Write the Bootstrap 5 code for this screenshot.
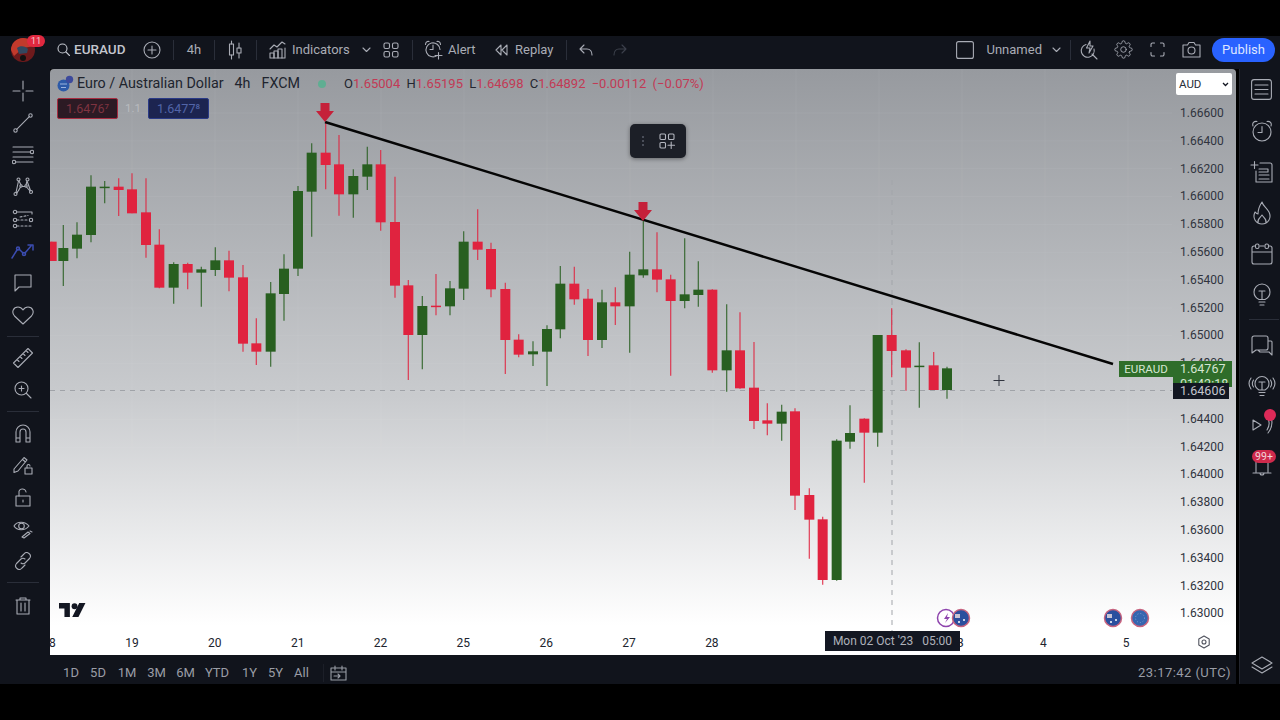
<!DOCTYPE html>
<html lang="en">
<head>
<meta charset="UTF-8" />
<meta name="viewport" content="width=device-width, initial-scale=1" />
<title>EURAUD chart</title>
<link href="https://cdn.jsdelivr.net/npm/bootstrap@5.3.0/dist/css/bootstrap.min.css" rel="stylesheet">
<style>
  html, body { height: 100%; }
  body { background: #000; font-family: Roboto, "Liberation Sans", sans-serif; color: #a9acb5; overflow: hidden; }
  .band { height: 36px; background: #000; }
  .ic { fill: none; stroke: currentColor; stroke-width: 1.1; stroke-linecap: round; stroke-linejoin: round; flex: none; }
  .main-row { height: 615px; }

  /* top toolbar */
  .topbar { height: 33px; background: #11141c; font-size: 13px; padding-bottom: 6px; }
  .tb-cell { height: 27px; display: flex; align-items: center; justify-content: center; flex: none; }
  .tb-sep { width: 1px; height: 20px; background: #2a2e39; margin: 0 8px; flex: none; }
  .tb-logo { width: 46px; position: relative; }
  .logo-badge { position: absolute; left: 27px; top: -1px; width: 18px; height: 12px; border-radius: 6px; background: #e0283f; color: #f3c6cc; font-size: 9.5px; line-height: 12px; text-align: center; }
  .tb-sym { width: 92px; padding-left: 11px; gap: 4px; justify-content: flex-start; font-weight: 500; font-size: 13.5px; color: #c3c6ce; }
  .w-plus { width: 27px; } .w-int { width: 24px; } .w-candle { width: 25px; }
  .w-ind { width: 90px; padding-left: 4px; gap: 5px; justify-content: flex-start; }
  .w-chev { width: 23px; } .w-grid { width: 26px; }
  .w-alert { width: 68px; padding-left: 3px; gap: 5px; justify-content: flex-start; }
  .w-replay { width: 69px; padding-left: 6px; gap: 7px; justify-content: flex-start; }
  .w-undo { width: 22px; } .w-redo { width: 46px; color: #3c404b; }
  .w-tool { width: 34px; }
  .w-save { gap: 13px; }
  .w-save-chev { width: 20px; margin-left: 4px; }
  .sep-tight { margin: 0 1px 0 4px; }
  .pub-btn { background: #2962ff; color: #dfe6ff; height: 24px; width: 63px; border-radius: 12px; font-size: 13px; line-height: 24px; padding: 0; border: 0; margin: 0 5px 0 4px; }

  /* side toolbars */
  .leftbar { width: 50px; background: #11141c; padding-top: 6px; flex: none; }
  .rightbar { width: 44px; background: #11141c; border-left: 1px solid #23262f; margin-left: 3px; flex: none; margin-right: -3px; }
  .lb-btn { width: 46px; height: 32px; display: flex; align-items: center; justify-content: center; }
  .lb-sep { width: 32px; height: 1px; background: #2a2e39; margin: 5px 0 5px 7px; }
  .lb-sep-last { margin-bottom: 7px; }
  .tool-on { color: #3b4cb0; stroke-width: 1.5; }
  .rb-btn { height: 41px; display: flex; align-items: center; justify-content: center; position: relative; }
  .rb-short { height: 38px; }
  .rb-bell { margin-top: 7px; }
  .rb-sep { width: 30px; height: 1px; background: #2a2e39; margin: 4px 0 6px 9px; }
  .rb-layers { height: 38px; margin-top: auto; }
  .rb-dot { position: absolute; right: 7px; top: 4px; width: 12px; height: 12px; border-radius: 50%; background: #dd2a58; }
  .rb-badge { position: absolute; left: 12px; top: 0; width: 24px; height: 13px; border-radius: 7px; background: #cf2a4c; color: #f3d5da; font-size: 10.5px; line-height: 13px; text-align: center; }

  /* chart */
  .chart-col { width: 1186px; flex: none; }
  .chart-wrap { height: 586px; position: relative; overflow: hidden; border-radius: 4px 4px 0 0; background: linear-gradient(#979a9f 0%, #c9cbce 56%, #fff 95%); }
  .chart-svg { position: absolute; left: 0; top: 0; }
  .plot { width: 1122px; position: relative; }
  .legend { height: 29px; padding-left: 7px; color: #20242e; font-size: 14.3px; }
  .leg-name { margin-left: 3px; }
  .leg-tf { margin-left: 11px; }
  .leg-src { margin-left: 11px; }
  .leg-dot { width: 8px; height: 8px; border-radius: 50%; background: #5fae92; margin: 0 18px 0 18px; }
  .ohlc { font-size: 13px; color: #c23a55; white-space: nowrap; word-spacing: 3px; }
  .ohlc b { font-weight: 400; color: #23262f; }
  .ask-row { padding-left: 7px; gap: 7px; height: 21px; font-size: 12.5px; }
  .ask-box { width: 61px; height: 21px; border-radius: 2px; text-align: center; line-height: 19px; }
  .ask-sell { background: #2c1a24; border: 1px solid #a62c40; color: #7f3340; }
  .ask-buy { background: #1c2450; border: 1px solid #2a3a86; color: #5264a8; }
  .ask-mid { width: 16px; text-align: center; color: #b9bbbf; line-height: 21px; font-size: 11.5px; }
  .float-bar { position: absolute; left: 580px; top: 55px; width: 56px; height: 34px; background: #1c1f27; border-radius: 5px; box-shadow: 0 1px 4px rgba(0,0,0,.4); color: #b2b5be; }
  .float-dots { width: 2px; height: 10px; margin-left: 12px; margin-right: 15px; border-left: 2px dotted #4a4e59; }
  .tv-logo { position: absolute; left: 9px; top: 534px; }
  .xaxis { margin-top: auto; height: 27px; margin-left: -42.3px; color: #20242e; font-size: 12px; line-height: 31px; position: relative; }
  .xtick { width: 82.85px; text-align: center; flex: none; }
  .date-tag { position: absolute; left: 775px; top: 562px; width: 135px; height: 20px; background: #131722; color: #aeb1ba; font-size: 12px; line-height: 21px; text-align: center; white-space: pre; }
  .yaxis { width: 64px; position: relative; color: #30343e; font-size: 12px; }
  .aud-box { width: 56px; height: 22px; margin: 4px 0 5px 4px; background: #fff; border-radius: 2px; color: #2a2e39; font-size: 11.5px; line-height: 22px; padding: 0 3px; }
  .ylabel { height: 27.8px; line-height: 27.8px; padding-left: 8px; }
  .ygear { margin-top: auto; height: 27px; color: #50535e; }
  .tag-name { position: absolute; left: 1069px; top: 292px; width: 54px; height: 16px; background: #2f6d2a; color: #d5e6d2; font-size: 11.5px; line-height: 16px; text-align: center; }
  .tag-price { position: absolute; left: 1123px; top: 292px; width: 59px; height: 26px; background: #2f6d2a; color: #d5e6d2; font-size: 12.5px; line-height: 15px; padding-left: 7px; overflow: hidden; }
  .tag-cross { position: absolute; left: 1123px; top: 314px; width: 56px; height: 16px; background: #131722; color: #c3c6ce; font-size: 12.5px; line-height: 16px; padding-left: 7px; }

  /* bottom bar */
  .timebar { height: 29px; background: #11141c; font-size: 13px; color: #9a9da6; padding-top: 7px; }
  .range { text-align: center; flex: none; }
  .r1d { width: 26px; margin-left: 8px; } .r5d { width: 28px; } .r1m { width: 30px; } .r3m { width: 29px; } .r6m { width: 29px; }
  .rytd { width: 34px; } .r1y { width: 31px; } .r5y { width: 21px; } .rall { width: 31px; }
  .time-sep { width: 1px; height: 18px; background: #1c1f28; margin: 0 6px; }
  .clock { margin-left: auto; margin-right: 5px; letter-spacing: .45px; }
</style>
</head>
<body>
<div class="band"></div>

<!-- top toolbar -->
<div class="topbar d-flex align-items-center">
  <div class="tb-cell tb-logo">
    <svg width="24" height="24" viewBox="0 0 24 24"><circle cx="12" cy="12" r="12" fill="#6e1a1c"/><path d="M0 12a12 12 0 0 1 12-12c7 0 12 5 12 8L12 10 3 18z" fill="#c23a2c"/><path d="M6 10c3-3 9-2 11 1l-1 4-8 1z" fill="#33485f"/><circle cx="12" cy="20" r="3" fill="#111"/></svg>
    <span class="logo-badge">11</span>
  </div>
  <div class="tb-cell tb-sym">
    <svg class="ic" width="13" height="13" viewBox="0 0 13 13"><circle cx="5.5" cy="5.5" r="4.5"/><path d="M9 9l3.5 3.5"/></svg>
    <span>EURAUD</span>
  </div>
  <div class="tb-cell w-plus"><svg class="ic" width="18" height="18" viewBox="0 0 18 18"><circle cx="9" cy="9" r="8"/><path d="M9 5v8M5 9h8"/></svg></div>
  <div class="tb-sep"></div>
  <div class="tb-cell w-int">4h</div>
  <div class="tb-sep"></div>
  <div class="tb-cell w-candle"><svg class="ic" width="15" height="20" viewBox="0 0 15 20"><rect x="1.5" y="4" width="4" height="11"/><path d="M3.5 1v3M3.5 15v4M11 3v5M11 13v5"/><rect x="9" y="8" width="4" height="5"/></svg></div>
  <div class="tb-sep"></div>
  <div class="tb-cell w-ind">
    <svg class="ic" width="18" height="18" viewBox="0 0 18 18"><path d="M1 8l4-4 3 2 5-5 3 2"/><rect x="1" y="12" width="4" height="5"/><rect x="5" y="10" width="4" height="7"/><rect x="9" y="8" width="4" height="9"/><path d="M13 17h3V7"/></svg>
    <span>Indicators</span>
  </div>
  <div class="tb-cell w-chev"><svg class="ic" width="9" height="6" viewBox="0 0 9 6"><path d="M1 1l3.5 3.5L8 1"/></svg></div>
  <div class="tb-cell w-grid"><svg class="ic" width="16" height="16" viewBox="0 0 16 16"><rect x="1" y="1" width="5.5" height="5.5" rx="1.5"/><rect x="9.5" y="1" width="5.5" height="5.5" rx="1.5"/><rect x="1" y="9.5" width="5.5" height="5.5" rx="1.5"/><rect x="9.5" y="9.5" width="5.5" height="5.5" rx="1.5"/></svg></div>
  <div class="tb-sep"></div>
  <div class="tb-cell w-alert">
    <svg class="ic" width="19" height="20" viewBox="0 0 19 20"><path d="M13 15.6A7 7 0 1 1 16 9.5"/><path d="M9 5v4.5H6M1.5 4.5C1.5 2 3.5 1 5 1.5M16.500 4.500C16.500 2 14.500 1 13 1.500M14.500 12.500v6.500M11 15.500h7"/></svg>
    <span>Alert</span>
  </div>
  <div class="tb-cell w-replay">
    <svg class="ic" width="13" height="12" viewBox="0 0 13 12"><path d="M6 1L1 6l5 5zM12 1L7 6l5 5z"/></svg>
    <span>Replay</span>
  </div>
  <div class="tb-sep"></div>
  <div class="tb-cell w-undo"><svg class="ic" width="14" height="12" viewBox="0 0 14 12"><path d="M5 1L1 5l4 4M1 5h7c3 0 5 2 5 6"/></svg></div>
  <div class="tb-cell w-redo"><svg class="ic" width="14" height="12" viewBox="0 0 14 12"><path d="M9 1l4 4-4 4M13 5H6c-3 0-5 2-5 6"/></svg></div>

  <div class="tb-cell w-save ms-auto">
    <svg class="ic" width="18" height="18" viewBox="0 0 18 18"><rect x=".6" y=".6" width="16.800" height="16.800" rx="2"/></svg>
    <span>Unnamed</span>
  </div>
  <div class="tb-cell w-save-chev"><svg class="ic" width="9" height="6" viewBox="0 0 9 6"><path d="M1 1l3.5 3.5L8 1"/></svg></div>
  <div class="tb-sep sep-tight"></div>
  <div class="tb-cell w-tool"><svg class="ic" width="18" height="20" viewBox="0 0 18 20"><path d="M6 4.500A6.500 6.500 0 1 0 14 9M12 14l5 5"/><path d="M10 1L6.500 8H10l-1 5 4-7h-3z"/></svg></div>
  <div class="tb-cell w-tool"><svg class="ic" width="19" height="19" viewBox="0 0 24 24"><circle cx="12" cy="12" r="3.500"/><path d="M19.4 15a1.65 1.65 0 0 0 .33 1.82l.06.06a2 2 0 0 1 0 2.83 2 2 0 0 1-2.83 0l-.06-.06a1.65 1.65 0 0 0-1.82-.33 1.65 1.65 0 0 0-1 1.51V21a2 2 0 0 1-2 2 2 2 0 0 1-2-2v-.09A1.65 1.65 0 0 0 9 19.4a1.65 1.65 0 0 0-1.82.33l-.06.06a2 2 0 0 1-2.83 0 2 2 0 0 1 0-2.83l.06-.06a1.65 1.65 0 0 0 .33-1.82 1.65 1.65 0 0 0-1.51-1H3a2 2 0 0 1-2-2 2 2 0 0 1 2-2h.09A1.65 1.65 0 0 0 4.600 9a1.65 1.65 0 0 0-.33-1.82l-.06-.06a2 2 0 0 1 0-2.83 2 2 0 0 1 2.83 0l.06.06a1.65 1.65 0 0 0 1.82.33H9a1.65 1.65 0 0 0 1-1.51V3a2 2 0 0 1 2-2 2 2 0 0 1 2 2v.09a1.65 1.65 0 0 0 1 1.51 1.65 1.65 0 0 0 1.82-.33l.06-.06a2 2 0 0 1 2.83 0 2 2 0 0 1 0 2.83l-.06.06a1.65 1.65 0 0 0-.33 1.82V9a1.65 1.65 0 0 0 1.51 1H21a2 2 0 0 1 2 2 2 2 0 0 1-2 2h-.09a1.65 1.65 0 0 0-1.51 1z"/></svg></div>
  <div class="tb-cell w-tool"><svg class="ic" width="15" height="15" viewBox="0 0 15 15"><path d="M1 4.500V2.500A1.500 1.500 0 0 1 2.500 1H4.500M10.500 1h2A1.500 1.500 0 0 1 14 2.500v2M14 10.500v2a1.500 1.500 0 0 1-1.500 1.500h-2M4.500 14h-2A1.500 1.500 0 0 1 1 12.500v-2"/></svg></div>
  <div class="tb-cell w-tool"><svg class="ic" width="19" height="17" viewBox="0 0 19 17"><path d="M1 4h4.500l1.500-2.500h5L13.500 4H18v12H1z"/><circle cx="9.500" cy="9.500" r="3.500"/></svg></div>
  <button class="pub-btn">Publish</button>
</div>

<div class="d-flex main-row">
  <!-- drawing tools -->
  <div class="leftbar d-flex flex-column">
    <div class="lb-btn"><svg class="ic" width="22" height="22" viewBox="0 0 22 22"><path d="M11 1v8M11 13v8M1 11h7M14 11h7" /></svg></div>
    <div class="lb-btn"><svg class="ic" width="20" height="20" viewBox="0 0 20 20"><circle cx="2.500" cy="17.500" r="1.700"/><circle cx="17.500" cy="2.500" r="1.700"/><path d="M3.700 16.300L16.300 3.700"/></svg></div>
    <div class="lb-btn"><svg class="ic" width="22" height="20" viewBox="0 0 22 20"><path d="M1 2h20M1 7h17M1 12h20M4 17h17"/><circle cx="20" cy="7" r="1.700"/><circle cx="2" cy="17" r="1.700"/></svg></div>
    <div class="lb-btn"><svg class="ic" width="20" height="20" viewBox="0 0 20 20"><circle cx="2.500" cy="17" r="1.500"/><circle cx="5.500" cy="2.500" r="1.500"/><circle cx="14.500" cy="2.500" r="1.500"/><circle cx="18" cy="15" r="1.500"/><circle cx="8" cy="9" r="1.200"/><circle cx="13" cy="9" r="1.200"/><path d="M3 15.500L5.500 4M6 4l2 4M9 9.500h3M6 13L3.500 16M14 4l3.500 9.500M14 4l-1 4M13.500 10l3.500 4M7.500 10L4 16"/></svg></div>
    <div class="lb-btn"><svg class="ic" width="22" height="20" viewBox="0 0 22 20"><circle cx="3" cy="3" r="1.700"/><path d="M5 3h15M20 3v2"/><circle cx="3" cy="11" r="1.700"/><circle cx="3" cy="17" r="1.700"/><circle cx="19" cy="11" r="1.700"/><path d="M5 11h12M5 17h16M8 8l8-1.500" stroke-dasharray="2 2"/></svg></div>
    <div class="lb-btn"><svg class="ic tool-on" width="24" height="16" viewBox="0 0 24 16"><path d="M1 15l5-8M8 6l4 4M14 10l6-7M17 2h5v5"/><circle cx="7" cy="5.500" r="1.500"/><circle cx="13" cy="11" r="1.500"/></svg></div>
    <div class="lb-btn"><svg class="ic" width="18" height="18" viewBox="0 0 18 18"><path d="M1 1h16v12H5l-4 4z"/></svg></div>
    <div class="lb-btn"><svg class="ic" width="22" height="19" viewBox="0 0 22 19"><path d="M11 18L2.500 10C-1 6 1.500 1 6 1c2.500 0 4 1.500 5 3 1-1.500 2.500-3 5-3 4.500 0 7 5 3.500 9z"/></svg></div>
    <div class="lb-sep"></div>
    <div class="lb-btn"><svg class="ic" width="22" height="22" viewBox="0 0 22 22"><path d="M1.500 16L16 1.500 20.500 6 6 20.500zM5 12.500l2 2M8 9.500l2 2M11 6.500l2 2M14 3.500l2 2"/></svg></div>
    <div class="lb-btn"><svg class="ic" width="18" height="18" viewBox="0 0 18 18"><circle cx="7.500" cy="7.500" r="6.500"/><path d="M12.500 12.500L17 17M7.500 5v5M5 7.500h5"/></svg></div>
    <div class="lb-sep"></div>
    <div class="lb-btn"><svg class="ic" width="16" height="19" viewBox="0 0 16 19"><path d="M1 18V8a7 7 0 0 1 14 0v10h-4V8a3 3 0 0 0-6 0v10zM1 14h4M11 14h4"/></svg></div>
    <div class="lb-btn"><svg class="ic" width="20" height="20" viewBox="0 0 20 20"><path d="M1 14L11 2.500l3 2.500L5 16l-4 1.500zM9.500 4.500l3 2.500"/><rect x="12" y="13" width="7" height="6"/><path d="M14 13v-2a1.500 1.500 0 0 1 3 0"/></svg></div>
    <div class="lb-btn"><svg class="ic" width="16" height="19" viewBox="0 0 16 19"><rect x="1" y="8" width="14" height="10"/><path d="M4 8V5a3.500 3.500 0 0 1 7-1M8 12v2"/></svg></div>
    <div class="lb-btn"><svg class="ic" width="20" height="20" viewBox="0 0 20 20"><path d="M1 7c3-5 11-5 15 0-4 5-12 5-15 0z"/><circle cx="8.500" cy="7" r="2.800"/><path d="M9 18l6-5 2 1.500-6 4.500zM17 12l2 1"/></svg></div>
    <div class="lb-btn"><svg class="ic" width="18" height="18" viewBox="0 0 18 18"><path d="M7 5l3-3a3.500 3.500 0 0 1 5.500 4.500L11 11a3.200 3.200 0 0 1-4 0M11 13l-3 3a3.500 3.500 0 0 1-5.500-4.500L7 7a3.200 3.200 0 0 1 4 0"/></svg></div>
    <div class="lb-sep lb-sep-last"></div>
    <div class="lb-btn"><svg class="ic" width="16" height="18" viewBox="0 0 16 18"><path d="M1 3h14M5 3V1h6v2M2 3v14h12V3M6 6v8M10 6v8"/></svg></div>
  </div>

  <div class="chart-col">
    <div class="chart-wrap d-flex">
      <svg id="chart" class="chart-svg" width="1186" height="586" viewBox="50 69 1186 586"></svg>

      <div class="plot d-flex flex-column">
        <div class="legend d-flex align-items-center">
          <svg width="17" height="17" viewBox="0 0 17 17"><circle cx="6.500" cy="10.500" r="6" fill="#2d5aa8"/><circle cx="12.500" cy="4.500" r="3.700" fill="#3d4a9c"/><path d="M3 9h7M4 12.500h5" stroke="#9cb4de"/></svg>
          <span class="leg-name">Euro / Australian Dollar</span>
          <span class="leg-tf">4h</span>
          <span class="leg-src">FXCM</span>
          <span class="leg-dot"></span>
          <span class="ohlc"><b>O</b>1.65004 <b>H</b>1.65195 <b>L</b>1.64698 <b>C</b>1.64892 −0.00112 (−0.07%)</span>
        </div>
        <div class="ask-row d-flex">
          <div class="ask-box ask-sell">1.6476⁷</div>
          <div class="ask-mid">1.1</div>
          <div class="ask-box ask-buy">1.6477⁸</div>
        </div>
        <div class="float-bar d-flex align-items-center">
          <span class="float-dots"></span>
          <svg class="ic" width="16" height="16" viewBox="0 0 16 16"><rect x="1" y="1" width="5.500" height="5.500" rx="1"/><rect x="9.500" y="1" width="5.500" height="5.500" rx="1"/><rect x="1" y="9.500" width="5.500" height="5.500" rx="1"/><path d="M12.200 9v6.500M9 12.200h6.500"/></svg>
        </div>
        <svg class="tv-logo" width="28" height="15" viewBox="0 0 36 19"><path d="M14 18H7V7H0V0h14zM34 0L25 18h-8l9-18z" fill="#131722"/><circle cx="20" cy="4" r="3.800" fill="#131722"/></svg>
        <div class="xaxis d-flex">
          <span class="xtick">18</span><span class="xtick">19</span><span class="xtick">20</span><span class="xtick">21</span><span class="xtick">22</span><span class="xtick">25</span><span class="xtick">26</span><span class="xtick">27</span><span class="xtick">28</span><span class="xtick"></span><span class="xtick"></span><span class="xtick">3</span><span class="xtick">4</span><span class="xtick">5</span>
        </div>
      </div>

      <div class="yaxis d-flex flex-column" id="yaxis">
        <div class="aud-box d-flex justify-content-between align-items-center"><span>AUD</span><svg width="7" height="5" viewBox="0 0 7 5"><path d="M1 1l2.500 2.500L6 1" fill="none" stroke="#131722" stroke-width="1.300"/></svg></div>
        <div class="ygear d-flex align-items-center justify-content-center"><svg class="ic" width="14" height="14" viewBox="0 0 14 14"><path d="M7 1l5.200 3v6L7 13l-5.200-3V4z"/><circle cx="7" cy="7" r="2"/></svg></div>
      </div>

      <div class="date-tag">Mon 02 Oct '23   05:00</div>
      <div class="tag-name">EURAUD</div>
      <div class="tag-price">1.64767<br>01:42:18</div>
      <div class="tag-cross">1.64606</div>
    </div>

    <div class="timebar d-flex align-items-center">
      <span class="range r1d">1D</span><span class="range r5d">5D</span><span class="range r1m">1M</span><span class="range r3m">3M</span><span class="range r6m">6M</span><span class="range rytd">YTD</span><span class="range r1y">1Y</span><span class="range r5y">5Y</span><span class="range rall">All</span>
      <span class="time-sep"></span>
      <svg class="ic" width="17" height="16" viewBox="0 0 17 16"><path d="M1 3h15v12H1zM1 7h15M5 1v4M12 1v4M4 11h6M8 9l2 2-2 2"/></svg>
      <span class="clock">23:17:42 (UTC)</span>
    </div>
  </div>

  <!-- right panel -->
  <div class="rightbar d-flex flex-column">
    <div class="rb-btn"><svg class="ic" width="21" height="21" viewBox="0 0 21 21"><rect x=".6" y=".6" width="19.800" height="19.800" rx="2.500"/><path d="M4 6h13M4 10.500h13M4 15h13"/></svg></div>
    <div class="rb-btn"><svg class="ic" width="22" height="22" viewBox="0 0 22 22"><circle cx="11" cy="12" r="9"/><path d="M11 6.500V12.500H7M2 6C1 3 3 1 6 1.500M20 6c1-3-1-5-4-4.500"/></svg></div>
    <div class="rb-btn"><svg class="ic" width="24" height="24" viewBox="0 0 24 24"><path d="M1 5h7M4.500 1.500v7M10 3h10a2 2 0 0 1 2 2v17H6V11M9 9h9v3H9M9 15h10M9 19h10"/></svg></div>
    <div class="rb-btn"><svg class="ic" width="20" height="24" viewBox="0 0 20 24"><path d="M10 1c1 4 4 5 7 10 3 6-1 12-7 12S0 17 3 11c1 1 2 2 3 2 0-5 2-9 4-12zM6 22c-1-4 2-5 4-8 2 3 5 4 4 8"/></svg></div>
    <div class="rb-btn"><svg class="ic" width="22" height="22" viewBox="0 0 22 22"><path d="M4 3H3a2 2 0 0 0-2 2v14a2 2 0 0 0 2 2h16a2 2 0 0 0 2-2V5a2 2 0 0 0-2-2h-1M9 3h4M1 9h20"/><rect x="4.500" y="1" width="3.500" height="4.500" rx="1.500"/><rect x="14" y="1" width="3.500" height="4.500" rx="1.500"/></svg></div>
    <div class="rb-btn"><svg class="ic" width="18" height="23" viewBox="0 0 18 23"><path d="M6 16.500C3 15 1 12.500 1 9a8 8 0 0 1 16 0c0 3.500-2 6-5 7.500zM6 8h6M9 8v8.500M6 19h6M7 22h4"/></svg></div>
    <div class="rb-sep"></div>
    <div class="rb-btn rb-short"><svg class="ic" width="22" height="21" viewBox="0 0 22 21"><path d="M3 1h12a2 2 0 0 1 2 2v10a2 2 0 0 1-2 2H5l-4 3V3a2 2 0 0 1 2-2zM17 6h3a1 1 0 0 1 1 1v13l-3-3H9l-2-2"/></svg></div>
    <div class="rb-btn"><svg class="ic" width="28" height="24" viewBox="0 0 28 24"><path d="M11 17c-2.500-1.500-4-3.500-4-6.500a7 7 0 0 1 14 0c0 3-1.500 5-4 6.500zM11 9h6M14 9v8M11 19.500h6M12 22.500h4M3 5c-2.500 3.500-2.500 7.500 0 11M5.500 7c-1.500 2.500-1.500 5 0 7M25 5c2.500 3.500 2.500 7.500 0 11M22.500 7c1.500 2.500 1.500 5 0 7"/></svg></div>
    <div class="rb-btn rb-short"><svg class="ic" width="22" height="20" viewBox="0 0 22 20"><path d="M2 6l8 5-8 5zM16 3c3 4 3 8 0 13M20 3c2 6 1 11-3 16"/></svg><span class="rb-dot"></span></div>
    <div class="rb-btn rb-short rb-bell"><svg class="ic" width="20" height="16" viewBox="0 0 20 16"><path d="M4 1v10M16 1v10M1 12h18M8 12a2 2 0 0 0 4 0"/></svg><span class="rb-badge">99+</span></div>
    <div class="rb-btn rb-layers"><svg class="ic" width="22" height="18" viewBox="0 0 22 18"><path d="M11 1l10 6-10 6L1 7zM1 11l10 6 10-6"/></svg></div>
  </div>
</div>

<div class="band"></div>

<script>
  // candle readings: [x, wickTop, wickBottom, bodyTop, bodyBottom, colour], measured in 3x crops
  const group1 = [[5,335,393,335,393,'r'],[40,285,468,354,393,'g'],[81,277,385,314,356,'g'],[123,136,337,170,315,'g'],[164,153,220,170,172,'g'],[206,145,258,170,180,'r'],[246,130,250,178,250,'r'],[288,145,383,247,345,'r'],[328,298,475,344,473,'r'],[371,397,521,402,473,'g'],[413,398,478,402,428,'r'],[454,410,530,418,428,'g'],[496,352,438,391,420,'g'],[537,362,484,391,443,'r'],[579,405,665,442,641,'r'],[619,565,705,640,665,'r'],[662,456,710,490,665,'g'],[702,373,572,416,492,'g'],[744,168,438,183,416,'g'],[785,40,320,68,185,'g'],[827,-24,178,68,105,'r'],[867,15,257,103,193,'r'],[910,118,263,138,193,'g'],[952,50,180,103,140,'g'],[992,60,302,103,277,'r']];
  const group2 = [[15,-70,293,66,257,'r'],[55,240,540,256,405,'r'],[97,288,508,318,405,'g'],[138,222,346,317,320,'r'],[180,243,346,265,319,'g'],[221,94,300,125,266,'g'],[263,28,180,125,149,'r'],[303,128,292,147,268,'r'],[346,248,522,267,420,'r'],[386,403,472,419,464,'r'],[429,424,498,454,463,'g'],[471,376,558,387,455,'g'],[511,198,415,251,388,'g'],[553,200,314,251,298,'r'],[594,267,468,296,420,'r'],[636,269,444,307,420,'g'],[676,262,375,307,319,'r'],[719,155,458,224,319,'g'],[760,62,233,208,226,'g'],[801,97,277,208,239,'r'],[842,224,527,238,303,'r'],[884,115,325,283,303,'g'],[925,184,320,269,285,'g'],[967,268,518,269,511,'r'],[1010,313,575,451,511,'g']];
  const group3 = [[120,67,296,181,295,'r'],[162,156,417,293,393,'r'],[202,340,436,391,401,'r'],[245,344,452,365,401,'g'],[285,355,660,364,617,'r'],[328,595,806,615,689,'r'],[368,680,884,688,870,'r'],[410,448,872,452,870,'g'],[450,346,476,429,455,'g'],[493,385,578,386,428,'r'],[533,135,470,135,428,'g'],[575,55,262,135,183,'r'],[618,178,302,181,233,'r'],[658,157,353,227,231,'g'],[701,186,300,226,300,'r'],[741,230,326,235,300,'g']];
  const colours = { r: '#e0233f', g: '#285f20' };
  let s = '';

  // grid, faint
  for (let y = 113; y < 630; y += 27.85) s += `<line x1="50" x2="1172" y1="${y}" y2="${y}" stroke="#fff" stroke-opacity=".05"/>`;
  for (let x = 132; x < 1172; x += 83) s += `<line x1="${x}" x2="${x}" y1="69" y2="628" stroke="#fff" stroke-opacity=".05"/>`;

  // crosshair goes under the candles
  s += '<line x1="50" x2="1172" y1="390.500" y2="390.500" stroke="#a0a3a8" stroke-dasharray="5 5"/>';
  s += '<line x1="892" x2="892" y1="180" y2="632" stroke="#a2a5aa" stroke-dasharray="5 5"/>';

  function addCandles(list, ox, oy) {
    list.forEach(c => {
      const x = ox + c[0] / 3, col = colours[c[5]];
      s += `<line x1="${x}" x2="${x}" y1="${oy + c[1] / 3}" y2="${oy + c[2] / 3}" stroke="${col}" stroke-width="1.300" stroke-opacity=".8"/>`;
      s += `<rect x="${x - 5}" y="${oy + c[3] / 3}" width="10" height="${Math.max((c[4] - c[3]) / 3, 1.500)}" fill="${col}"/>`;
    });
  }
  addCandles(group1, 50, 130);
  addCandles(group2, 390, 200);
  addCandles(group3, 700, 290);

  // trend line and the two arrows
  s += '<line x1="325" y1="122" x2="1113" y2="364" stroke="#050505" stroke-width="2.500"/>';
  const arrow = (x, y) => `<path d="M${x - 4.500} ${y}h9v8h4.500l-9 11-9-11h4.500z" fill="#c5213a"/>`;
  s += arrow(325, 103) + arrow(643, 202);

  // cursor
  s += '<path d="M999 375v11M993.500 380.500h11" stroke="#30343e"/>';

  // economic events
  const au = (x, y) => `<circle cx="${x}" cy="${y}" r="8.500" fill="#2a4f9e" stroke="#c8637e" stroke-width="1.500"/><path d="M${x - 6} ${y - 4}h5v4h-5z" fill="#c9c3d4"/><circle cx="${x + 3}" cy="${y + 2}" r="1" fill="#fff"/><circle cx="${x - 2}" cy="${y + 4}" r="1" fill="#fff"/>`;
  s += '<circle cx="946" cy="618" r="8.500" fill="#fff" stroke="#8e44ad" stroke-width="1.500"/><path d="M948 613l-4 6h3l-2 4 5-6h-3z" fill="#8e44ad"/>';
  s += au(961, 618) + au(1113, 618);
  s += '<circle cx="1140" cy="618" r="8.500" fill="#3566b0" stroke="#c8637e" stroke-width="1.500"/><circle cx="1140" cy="618" r="4.500" fill="none" stroke="#7fa0d4" stroke-dasharray="1 2"/>';
  document.getElementById('chart').innerHTML = s;

  // price scale
  const yaxis = document.getElementById('yaxis');
  const gear = yaxis.querySelector('.ygear');
  for (let i = 0; i < 19; i++) {
    const row = document.createElement('div');
    row.className = 'ylabel';
    row.textContent = (1.666 - i * 0.002).toFixed(5);
    yaxis.insertBefore(row, gear);
  }
</script>
</body>
</html>
